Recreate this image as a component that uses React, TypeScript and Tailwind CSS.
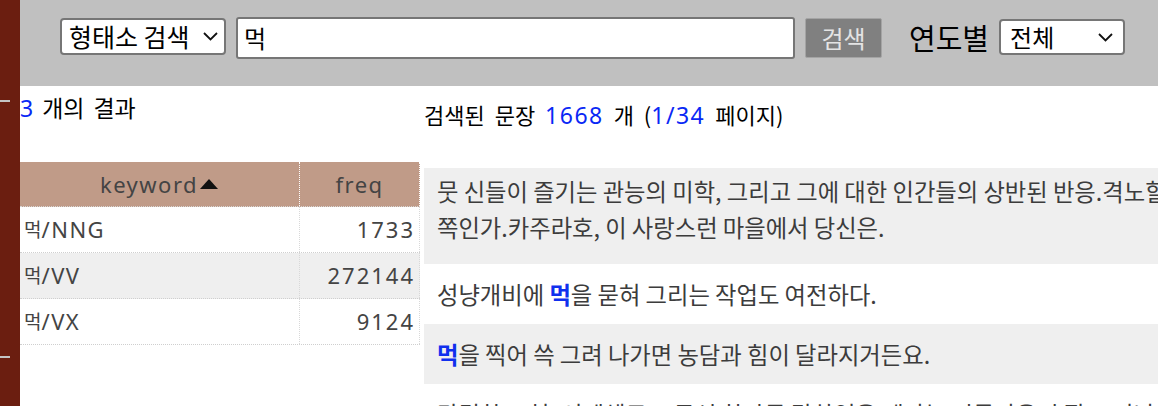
import React from "react";

const rows = [
  { keyword: "/NNG", freq: "1733", shade: false },
  { keyword: "/VV", freq: "272144", shade: true },
  { keyword: "/VX", freq: "9124", shade: false },
];

function Chevron() {
  return (
    <svg width="15" height="9" viewBox="0 0 15 9" fill="none">
      <polyline points="1,1 7.5,7.5 14,1" stroke="#111" strokeWidth="1.8" />
    </svg>
  );
}

function Hit() {
  return <span className="font-bold text-[#1030ee]">먹</span>;
}

function App() {
  return (
    <div className="w-[1158px] h-[406px] overflow-hidden flex bg-white font-['Noto_Sans','Noto_Sans_CJK_KR',sans-serif] text-black">
      {/* left strip */}
      <div className="w-[20px] shrink-0 bg-[#6b1e10] flex flex-col">
        <div className="h-[100px]" />
        <div className="h-[2px] w-[10px] bg-[#c4c4c4]" />
        <div className="h-[254px]" />
        <div className="h-[2px] w-[10px] bg-[#c4c4c4]" />
      </div>

      <div className="flex-1 flex flex-col">
        {/* search bar */}
        <div className="h-[86px] shrink-0 bg-[#c0c0c0] flex items-start pl-[40px] pt-[17px]">
          <div className="mt-[1px] h-[37px] w-[166px] bg-white border-2 border-[#767676] rounded-[4px] flex items-center pl-[7px] pr-[6px] text-[25px] leading-none">
            <span className="font-['Noto_Sans_CJK_KR',sans-serif]">형태소 검색</span>
            <span className="ml-auto flex">
              <Chevron />
            </span>
          </div>
          <div className="ml-[10px] h-[42px] w-[559px] bg-white border-2 border-[#767676] rounded-[3px] flex items-center pl-[6px] text-[24px] leading-none font-['Noto_Sans_CJK_KR',sans-serif]">
            먹
          </div>
          <div className="ml-[10px] mt-[1px] h-[40px] w-[77px] bg-[#808080] border border-[#a4a4a4] rounded-[2px] flex items-center justify-center text-[24px] leading-none text-[#e4e4e4] font-['Noto_Sans_CJK_KR',sans-serif]">
            검색
          </div>
          <div className="ml-[27px] h-[40px] flex items-center text-[29px] leading-none font-['Noto_Sans_CJK_KR',sans-serif]">
            연도별
          </div>
          <div className="ml-[10px] mt-[2px] h-[36px] w-[126px] bg-white border-2 border-[#767676] rounded-[4px] flex items-center pl-[9px] pr-[10px] text-[24px] leading-none">
            <span className="font-['Noto_Sans_CJK_KR',sans-serif]">전체</span>
            <span className="ml-auto flex">
              <Chevron />
            </span>
          </div>
        </div>

        <div className="flex">
          {/* keyword table */}
          <div className="w-[400px] shrink-0 flex flex-col">
            <div className="h-[76px] pt-[9px] text-[23px] leading-[26px] [word-spacing:3px]">
              <span className="text-[#0a28f5]">3</span> 개의 결과
            </div>
            <div className="flex flex-col text-[#444] text-[22px] tracking-[1.5px]">
              <div className="h-[45px] flex bg-[#c09b88] border-b border-dotted border-[#d6d6d6]">
                <div className="w-[280px] flex items-center justify-center border-r border-dotted border-white">
                  keyword
                  <svg width="20" height="12" viewBox="0 0 20 12" className="ml-[1px]">
                    <polygon points="10,1 19,11 1,11" fill="#111" />
                  </svg>
                </div>
                <div className="w-[120px] flex items-center justify-center border-r border-dotted border-white">
                  freq
                </div>
              </div>
              {rows.map((r) => (
                <div
                  key={r.keyword}
                  className={
                    "h-[46px] flex border-b border-dotted border-[#cfcfcf] " +
                    (r.shade ? "bg-[#efefef]" : "bg-white")
                  }
                >
                  <div className="w-[280px] flex items-center pl-[4px] border-r border-dotted border-[#d8d8d8]">
                    <span className="text-[19px] tracking-normal font-['Noto_Sans_CJK_KR',sans-serif]">먹</span>
                    {r.keyword}
                  </div>
                  <div className="w-[120px] flex items-center justify-end pr-[4px] tracking-[2px] border-r border-dotted border-[#d8d8d8]">
                    {r.freq}
                  </div>
                </div>
              ))}
            </div>
          </div>

          {/* sentences */}
          <div className="ml-[4px] w-[1000px] shrink-0 flex flex-col">
            <div className="h-[82px] pt-[15px] text-[22px] leading-[26px] [word-spacing:5px] font-['Noto_Sans_CJK_KR',sans-serif]">
              검색된 문장{" "}
              <span className="text-[#0a28f5] text-[23px] tracking-[1.5px] font-['Noto_Sans',sans-serif]">1668</span> 개 (
              <span className="text-[#0a28f5] text-[23px] tracking-[1.5px] font-['Noto_Sans',sans-serif]">1/34</span> 페이지)
            </div>
            <div className="flex flex-col text-[23.3px] leading-[36px] text-[#3c3c3c] whitespace-nowrap font-['Noto_Sans_CJK_KR',sans-serif]">
              <div className="bg-[#efefef] pl-[13px] pt-[5px] pb-[19px]">
                뭇 신들이 즐기는 관능의 미학, 그리고 그에 대한 인간들의 상반된 반응.격노할 것인가 감탄할 것인가, 당신은 어느
                <br />
                쪽인가.카주라호, 이 사랑스런 마을에서 당신은.
              </div>
              <div className="bg-white pl-[13px] py-[12px]">
                성냥개비에 <Hit />을 묻혀 그리는 작업도 여전하다.
              </div>
              <div className="bg-[#efefef] pl-[13px] py-[12px]">
                <Hit />을 찍어 쓱 그려 나가면 농담과 힘이 달라지거든요.
              </div>
              <div className="bg-white pl-[13px] py-[12px]">
                간결한 표현, 서예체로도 묵선 한자를 말하였을 때라는 이름다움이 잘 드러난다.
              </div>
            </div>
          </div>
        </div>
      </div>
    </div>
  );
}

export default App;
